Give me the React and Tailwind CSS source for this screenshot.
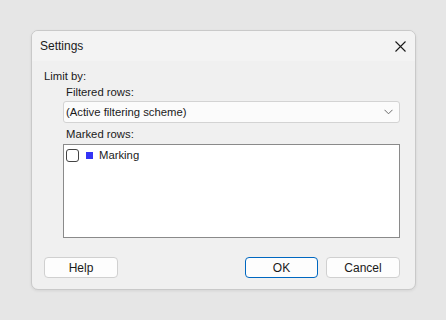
export default function App() {
  return (
    <div className="w-[446px] h-[320px] bg-[#e6e6e6] pt-[30px] pl-[31px] font-['Segoe_UI','Liberation_Sans',sans-serif] text-[12px] leading-[16px] text-[#1a1a1a]">
      <div className="w-[385px] h-[260px] flex flex-col rounded-[7px] border border-[#c9c9c9] bg-[#f0f0f0] overflow-hidden shadow-[0_1px_3px_rgba(0,0,0,0.08)]">
        {/* Title bar */}
        <div className="h-[30px] shrink-0 flex items-center justify-between pl-[8px] pr-[9px] bg-[#f3f3f3]">
          <span>Settings</span>
          <svg width="11" height="11" viewBox="0 0 11 11" className="text-[#1a1a1a]">
            <path d="M0.5 0.5 L10.5 10.5 M10.5 0.5 L0.5 10.5" stroke="currentColor" strokeWidth="1.1" fill="none" />
          </svg>
        </div>

        {/* Body */}
        <div className="flex-1 flex flex-col pt-[7px] pl-[12px] pr-[15px] text-[11.3px]">
          <div>Limit by:</div>
          <div className="pl-[19px] flex flex-col">
            <div className="pl-[3px]">Filtered rows:</div>
            <div className="mt-[1px] h-[22px] flex items-center justify-between bg-[#fbfbfb] border border-[#d3d3d3] rounded-[3px] pl-[2px] pr-[6px]">
              <span>(Active filtering scheme)</span>
              <svg width="9" height="6" viewBox="0 0 9 6">
                <path d="M0.5 0.8 L4.5 4.8 L8.5 0.8" stroke="#6b6b6b" strokeWidth="1" fill="none" />
              </svg>
            </div>
            <div className="mt-[3px] pl-[3px]">Marked rows:</div>
            <div className="mt-[2px] h-[94px] bg-white border border-[#8a8a8a] pl-[2px] pt-[2px]">
              <div className="flex items-center">
                <span className="w-[13px] h-[13px] rounded-[3px] border border-[#444] bg-white" />
                <span className="ml-[7px] w-[7px] h-[7px] bg-[#3434f5]" />
                <span className="ml-[6px]">Marking</span>
              </div>
            </div>
          </div>

          <div className="mt-[19px] flex items-center text-[12px]">
            <button className="w-[74px] h-[21px] bg-[#fdfdfd] border border-[#d0d0d0] rounded-[4px]">Help</button>
            <div className="flex-1" />
            <button className="w-[73px] h-[21px] bg-[#fdfdfd] border border-[#0067c0] rounded-[4px]">OK</button>
            <button className="ml-[8px] w-[74px] h-[21px] bg-[#fdfdfd] border border-[#d0d0d0] rounded-[4px]">Cancel</button>
          </div>
        </div>
      </div>
    </div>
  );
}
